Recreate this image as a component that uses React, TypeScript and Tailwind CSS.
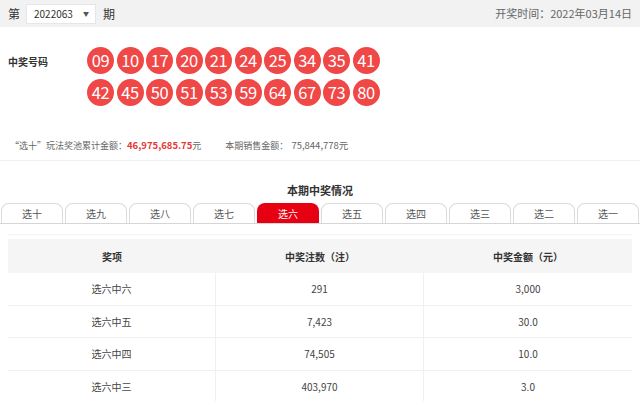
import React from "react";

const row1 = ["09", "10", "17", "20", "21", "24", "25", "34", "35", "41"];
const row2 = ["42", "45", "50", "51", "53", "59", "64", "67", "73", "80"];
const tabs = ["选十", "选九", "选八", "选七", "选六", "选五", "选四", "选三", "选二", "选一"];
const rows = [
  ["选六中六", "291", "3,000"],
  ["选六中五", "7,423", "30.0"],
  ["选六中四", "74,505", "10.0"],
  ["选六中三", "403,970", "3.0"],
];

function Ball({ n }: { n: string }) {
  return (
    <div className="w-[27px] h-[27px] rounded-full bg-[#f04747] text-white text-[16.5px] leading-none flex items-center justify-center tracking-[-0.5px]">
      {n}
    </div>
  );
}

export default function App() {
  return (
    <div
      className="w-[640px] h-[401px] overflow-hidden bg-white text-[#333]"
      style={{ fontFamily: '"Noto Sans CJK SC", "Noto Sans", sans-serif' }}
    >
      <div className="h-[27px] bg-[#f2f2f2] flex items-center justify-between pl-[8px] pr-[8px]">
        <div className="flex items-center text-[12px]">
          <span>第</span>
          <div className="ml-[6px] w-[70px] h-[20px] bg-white border border-[#e6e6e6] flex items-center justify-between pl-[7px] pr-[6px] text-[10px]">
            <span>2022063</span>
            <span className="text-[6px] text-[#555]">▼</span>
          </div>
          <span className="ml-[7px]">期</span>
        </div>
        <div className="text-[11px] text-[#666]">开奖时间：2022年03月14日</div>
      </div>

      <div className="flex pt-[20px] pl-[8px]">
        <div className="w-[79px] text-[10px] font-bold text-[#333] pt-[7px]">中奖号码</div>
        <div className="flex flex-col gap-[5px]">
          <div className="flex gap-[2.5px]">
            {row1.map((n) => (
              <Ball key={n} n={n} />
            ))}
          </div>
          <div className="flex gap-[2.5px]">
            {row2.map((n) => (
              <Ball key={n} n={n} />
            ))}
          </div>
        </div>
      </div>

      <div className="mt-[25px] pl-[10px] h-[30px] flex items-center text-[9px] text-[#666] border-b border-[#f0f0f0]">
        <span>“选十”玩法奖池累计金额：</span>
        <span className="text-[#e53935] font-bold text-[9.5px]">46,975,685.75</span>
        <span>元</span>
        <span className="ml-[24px]">本期销售金额：</span>
        <span className="ml-[3px] text-[9.5px]">75,844,778元</span>
      </div>

      <div className="mt-[21px] text-center text-[11px] font-bold text-[#333] leading-[16px]">本期中奖情况</div>

      <div className="mt-[5px] flex border-b border-[#d6d6d6]">
        {tabs.map((t) => (
          <div key={t} className="w-[64px] px-[1px]">
            <div
              className={
                t === "选六"
                  ? "h-[20px] rounded-t-[8px] bg-[#e60012] text-white text-[10px] flex items-center justify-center"
                  : "h-[20px] rounded-t-[8px] border border-b-0 border-[#dcdcdc] bg-white text-[#555] text-[10px] flex items-center justify-center"
              }
            >
              {t}
            </div>
          </div>
        ))}
      </div>

      <div className="mx-[8px] mt-[10px] border-t border-[#f3f3f3] pt-[4px]">
        <div className="grid grid-cols-3 bg-[#f5f5f5] h-[34px] items-center text-[10px] font-bold text-[#333]">
          <div className="text-center">奖项</div>
          <div className="text-center">中奖注数（注）</div>
          <div className="text-center">中奖金额（元）</div>
        </div>
        {rows.map((r) => (
          <div key={r[0]} className="grid grid-cols-3 h-[32.5px] border-b border-[#f0f0f0] text-[10px] text-[#444]">
            <div className="flex items-center justify-center border-r border-[#f0f0f0]">{r[0]}</div>
            <div className="flex items-center justify-center border-r border-[#f0f0f0]">{r[1]}</div>
            <div className="flex items-center justify-center">{r[2]}</div>
          </div>
        ))}
      </div>
    </div>
  );
}
